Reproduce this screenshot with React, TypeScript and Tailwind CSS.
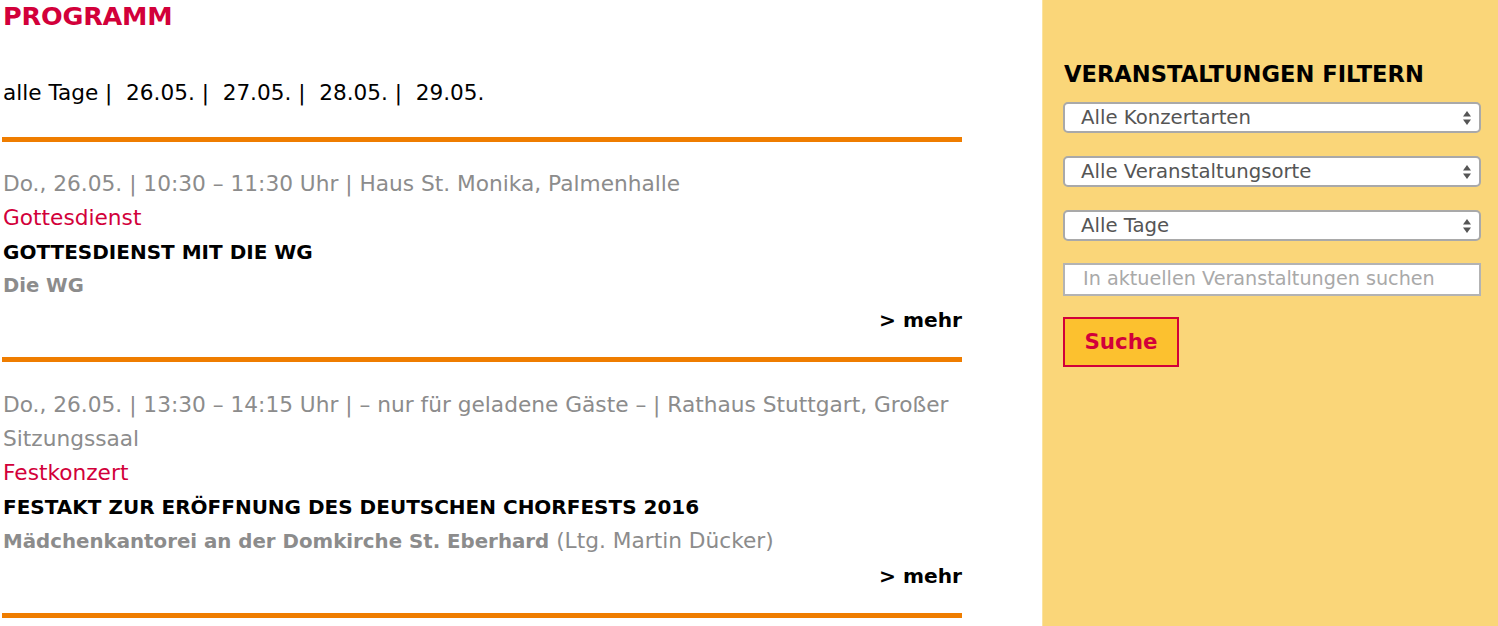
import React from "react";

const Arrows = () => (
  <svg width="10" height="16" viewBox="0 0 10 16" className="shrink-0">
    <path d="M5 1 L9 6.5 L1 6.5 Z" fill="#555" />
    <path d="M5 15 L9 9.5 L1 9.5 Z" fill="#555" />
  </svg>
);

const Select = ({ label }: { label: string }) => (
  <div className="flex h-[31px] items-center justify-between rounded-[5px] border-2 border-[#a9a9a9] bg-white pl-[16px] pr-[7px] text-[19.7px] text-[#555]">
    <span>{label}</span>
    <Arrows />
  </div>
);

const Mehr = () => (
  <div className="flex justify-end text-[20.2px] font-bold leading-[34px] text-black">&gt; mehr</div>
);

export default function App() {
  return (
    <div
      className="flex min-h-[626px] w-[1498px] bg-white"
      style={{ fontFamily: '"DejaVu Sans", "Noto Sans", sans-serif' }}
    >
      <div className="w-[1042px] pl-[2px] pr-[80px]">
        <h1 className="pl-[1px] text-[25.5px] font-bold leading-[32px] tracking-[-0.2px] text-[#d2003a]">PROGRAMM</h1>
        <div className="mt-[44px] pl-[1px] text-[21.6px] leading-[34px] text-black">
          alle Tage |&nbsp; 26.05. |&nbsp; 27.05. |&nbsp; 28.05. |&nbsp; 29.05.
        </div>
        <div className="mt-[27px] h-[5px] bg-[#ef7d00]" />
        <div className="pl-[1px] pt-[25px] text-[21.7px] leading-[34px]">
          <div className="text-[#8c8c8c]">Do., 26.05. | 10:30 – 11:30 Uhr | Haus St. Monika, Palmenhalle</div>
          <div className="text-[#d2003a]">Gottesdienst</div>
          <div className="text-[20px] font-bold text-black">GOTTESDIENST MIT DIE WG</div>
          <div className="text-[19.6px] font-bold text-[#8c8c8c]">Die WG</div>
          <Mehr />
        </div>
        <div className="mt-[20px] h-[5px] bg-[#ef7d00]" />
        <div className="pl-[1px] pt-[26px] text-[21.7px] leading-[34px]">
          <div className="text-[#8c8c8c]">
            Do., 26.05. | 13:30 – 14:15 Uhr | – nur für geladene Gäste – | Rathaus Stuttgart, Großer Sitzungssaal
          </div>
          <div className="text-[#d2003a]">Festkonzert</div>
          <div className="text-[20px] font-bold text-black">FESTAKT ZUR ERÖFFNUNG DES DEUTSCHEN CHORFESTS 2016</div>
          <div className="text-[#8c8c8c]">
            <span className="text-[19.8px] font-bold">Mädchenkantorei an der Domkirche St. Eberhard</span> (Ltg. Martin Dücker)
          </div>
          <Mehr />
        </div>
        <div className="mt-[20px] h-[5px] bg-[#ef7d00]" />
      </div>
      <div className="flex-1 border-l border-[#fbe39f] bg-[#fad679] pl-[20px] pr-[17px] pt-[58px]">
        <h2 className="pl-[1px] text-[22.6px] font-bold leading-[32px] text-black">VERANSTALTUNGEN FILTERN</h2>
        <div className="mt-[12px] flex flex-col gap-[23px]">
          <Select label="Alle Konzertarten" />
          <Select label="Alle Veranstaltungsorte" />
          <Select label="Alle Tage" />
        </div>
        <div className="mt-[22px] flex h-[33px] items-center border-2 border-[#b3b3b3] bg-white pl-[18px] text-[19.2px] text-[#a9a9a9]">
          In aktuellen Veranstaltungen suchen
        </div>
        <button className="mt-[21px] flex h-[50px] w-[116px] items-center justify-center border-2 border-[#d2003a] bg-[#fcc12f] text-[21.4px] font-bold text-[#d2003a]">
          Suche
        </button>
      </div>
    </div>
  );
}
